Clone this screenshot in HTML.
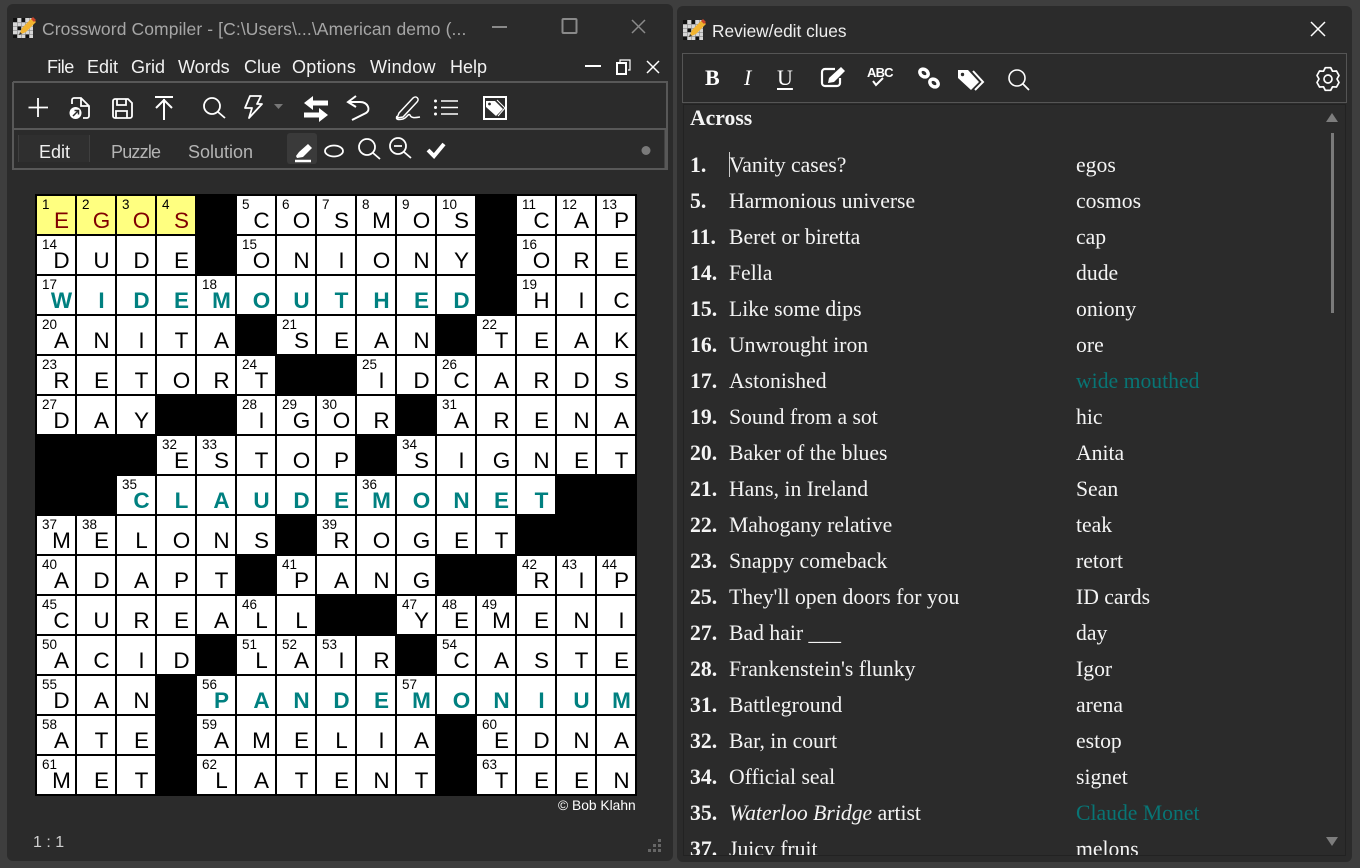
<!DOCTYPE html>
<html><head><meta charset="utf-8"><style>
html,body{margin:0;padding:0;width:1360px;height:868px;overflow:hidden;background:#3e3e3e}
body{position:relative;font-family:"Liberation Sans",sans-serif}
.a{position:absolute;white-space:nowrap}
.win{position:absolute;background:#2b2b2b;border-radius:6px}
.m{position:absolute;top:56px;font-size:18px;line-height:22px;color:#f2f2f2;white-space:nowrap}
.t{position:absolute;top:141px;font-size:18px;line-height:22px;color:#b4b4b4;white-space:nowrap}
#g{position:absolute;left:35px;top:194px;width:602px;height:602px;background:#000;display:grid;grid-template-columns:repeat(15,38px);grid-auto-rows:38px;gap:2px;padding:2px;box-sizing:border-box;font-family:"Liberation Sans",sans-serif}
#g div{background:#fff;position:relative;color:#000;font-size:22.5px;line-height:49px;text-align:center;padding-left:11px;width:27px;height:38px}
#g div.b{background:#000}
#g div.y{background:#ffff80;color:#800000}
#g div.k{color:#008080;font-weight:bold}
#g i{position:absolute;left:5px;top:0;width:auto;font:normal 13.5px/18px "Liberation Sans",sans-serif;color:#000}
#c{position:absolute;left:690px;top:0;width:640px;height:855px;overflow:hidden;font-family:"Liberation Serif",serif;font-size:21.7px;color:#f4f4f4}
#c p{position:absolute;margin:0;white-space:nowrap;line-height:26px}
#c b{position:absolute;left:0}
#c span{position:absolute;left:39px}
#c u{position:absolute;left:386px;text-decoration:none}
#c u.q{color:#087575}
svg{position:absolute;left:0;top:0}
</style></head><body>
<div class="win" style="left:7px;top:4px;width:666px;height:857px"></div>
<div class="win" style="left:677px;top:6px;width:675px;height:856px"></div>

<svg width="1360" height="868" fill="none" stroke="#fff" stroke-width="2">
<!-- toolbar frame -->
<path d="M13 82H667V129M13 82V169H667V129M14 129H667" stroke="#585858"/>
<path d="M666 130V168" stroke="#585858" stroke-width="3"/>
<rect x="18" y="135" width="72" height="27" fill="#2f2f2f" stroke="none"/>
<path d="M18.500 135V162M89.500 135V162" stroke="#3f3f3f" stroke-width="1"/>
<rect x="287" y="133" width="30" height="31" rx="3" fill="#3a3a3a" stroke="none"/>
<!-- right toolbar frame -->
<rect x="682.500" y="53.500" width="664" height="49" stroke="#555" stroke-width="1"/>
<rect x="683.500" y="104.500" width="662" height="751" stroke="#222" stroke-width="1"/>

<!-- app icons -->
<g stroke="none">
<rect x="13" y="18" width="20" height="20" fill="#d6d6d6"/>
<path d="M13 18h4v4h-4zM21 18h4v4h-4zM17 26h4v4h-4zM13 34h4v4h-4zM25 34h4v4h-4zM29 22h4v3h-4z" fill="#111"/>
<path d="M13 22h20v.6H13zM13 26h20v.6H13zM13 30h20v.6H13zM13 34h20v.6H13zM17 18h.6v20H17zM21 18h.6v20H21zM25 18h.6v20H25zM29 18h.6v20H29z" fill="#888"/>
<path d="M19 35l3-7L32 18l4 4-10 10z" fill="#f2b430"/>
<path d="M31 19l2-2 3 3-2 2z" fill="#c8442a"/>
<path d="M19 35l1-3 2 2z" fill="#333"/>
</g>
<g stroke="none" transform="translate(670 2)">
<rect x="13" y="18" width="20" height="20" fill="#d6d6d6"/>
<path d="M13 18h4v4h-4zM21 18h4v4h-4zM17 26h4v4h-4zM13 34h4v4h-4zM25 34h4v4h-4zM29 22h4v3h-4z" fill="#111"/>
<path d="M13 22h20v.6H13zM13 26h20v.6H13zM13 30h20v.6H13zM13 34h20v.6H13zM17 18h.6v20H17zM21 18h.6v20H21zM25 18h.6v20H25zM29 18h.6v20H29z" fill="#888"/>
<path d="M19 35l3-7L32 18l4 4-10 10z" fill="#f2b430"/>
<path d="M31 19l2-2 3 3-2 2z" fill="#c8442a"/>
<path d="M19 35l1-3 2 2z" fill="#333"/>
</g>

<!-- window controls -->
<path d="M492 27H507" stroke="#8a8a8a"/>
<rect x="562.500" y="19" width="14" height="14" rx="1" stroke="#8a8a8a"/>
<path d="M632 20L645 33M645 20L632 33" stroke="#8a8a8a" stroke-width="1.500"/>
<path d="M585 66H601"/>
<path d="M617 63h9v11h-9z"/><path d="M620 62v-2h10v10h-2" stroke-width="1.200"/>
<path d="M647 61L659 73M659 61L647 73" stroke-width="1.500"/>
<path d="M1311 22L1325 36M1325 22L1311 36" stroke-width="1.500"/>

<!-- main toolbar row -->
<path d="M38 98V117M28.500 107.500H48" stroke-width="1.800"/>
<path d="M72 104v-4a2 2 0 0 1 2-2h7l8 8v10a2 2 0 0 1-2 2h-4M81 98v8h8" stroke-width="1.800"/>
<circle cx="75.500" cy="113" r="6" fill="#fff" stroke="none"/>
<path d="M73 116l5-5M74.500 110.500h4v4" stroke="#2b2b2b" stroke-width="1.500"/>
<path d="M115 99h13l4 4v13a2 2 0 0 1-2 2h-15a2 2 0 0 1-2-2v-15a2 2 0 0 1 2-2zM117 99v6h9v-6M116 118v-7h11v7" stroke-width="1.800"/>
<path d="M155 97H173M164 120V99M156 108L164 100L172 108" stroke-width="2"/>
<circle cx="212" cy="106" r="8" stroke-width="1.800"/><path d="M218 112L225 118" stroke-width="1.800"/>
<path d="M250 96h11l-4 8h5l-13 14 3-10h-7z" stroke-width="1.800" stroke-linejoin="round"/>
<path d="M274 104h9l-4.500 5z" fill="#777" stroke="none"/>
<path d="M304 103l9-7v4.500h15v5h-15v4.500zM328 115l-9-7v4.500h-15v5h15v4.500z" fill="#fff" stroke="none"/>
<path d="M356 96L348 102L356 107M348 102H360C368 102 371 110 366 113L352 120" stroke-width="2"/>
<path d="M399 113L413 98C416 95 420 99 417 102L403 117L397 118ZM397 116C395 120 399 120 403 119C407 118 408 113 410 115C411 118 414 118 420 117" stroke-width="1.500"/>
<path d="M441 101H458M441 107.500H458M441 114H458" stroke-width="1.500"/>
<circle cx="435.500" cy="101" r="1.500" fill="#fff" stroke="none"/><circle cx="435.500" cy="107.500" r="1.500" fill="#fff" stroke="none"/><circle cx="435.500" cy="114" r="1.500" fill="#fff" stroke="none"/>
<rect x="484" y="97" width="22" height="22"/>
<path d="M486 101h9l8 8-7 7-10-9z" fill="#fff" stroke="none"/><circle cx="489.500" cy="104" r="1.400" fill="#2b2b2b" stroke="none"/>
<path d="M497 100l8 8-7 8" stroke-width="1"/>

<!-- second row -->
<path d="M296 156L299 152L308 144L312 148L303 157L297 158Z" fill="#fff" stroke="none"/>
<path d="M295 161H311" stroke-width="2.500"/>
<ellipse cx="334" cy="151" rx="9" ry="5.500" stroke-width="1.800"/>
<circle cx="367" cy="147" r="8" stroke-width="1.800"/><path d="M373 153L380 159" stroke-width="1.800"/>
<circle cx="398" cy="146" r="8" stroke-width="1.800"/><path d="M404 152L411 158M394 146H402" stroke-width="1.800"/>
<path d="M428 150L434 156L444 144" stroke-width="4"/>
<circle cx="646" cy="150.500" r="4.500" fill="#7a7a7a" stroke="none"/>

<!-- resize grip -->
<path d="M658 839h3v3h-3zM653 844h3v3h-3zM658 844h3v3h-3zM648 849h3v3h-3zM653 849h3v3h-3zM658 849h3v3h-3z" fill="#666" stroke="none"/>

<!-- right toolbar icons -->
<path d="M835 69h-10a3 3 0 0 0-3 3v11a3 3 0 0 0 3 3h12a3 3 0 0 0 3-3v-5" stroke-width="2.200"/>
<path d="M829 78L841 67l4 4-11 11-6 1z" fill="#fff" stroke="none"/>
<path d="M873 81l3 4 7-7" stroke-width="2"/>
<g stroke-width="3.500"><ellipse cx="924" cy="73" rx="4.500" ry="3.500" transform="rotate(38 924 73)"/><ellipse cx="934" cy="83" rx="4.500" ry="3.500" transform="rotate(38 934 83)"/></g>
<path d="M958 70h10l11 12-8 8-13-12z" fill="#fff" stroke="none"/>
<path d="M973 71l10 11-8 8" stroke-width="2"/>
<circle cx="962.500" cy="74.500" r="1.700" fill="#2b2b2b" stroke="none"/>
<circle cx="1017" cy="78" r="8" stroke-width="1.600"/><path d="M1023 84L1029 90" stroke-width="1.800"/>
<g transform="translate(1328 79)" stroke-width="1.700" stroke-linejoin="round">
<path d="M-2.700-11.300L2.700-11.300L4.500-7.800L8.500-8L11-3.500L9 0L11 3.500L8.500 8L4.500 7.800L2.700 11.300L-2.700 11.300L-4.500 7.800L-8.500 8L-11 3.500L-9 0L-11-3.500L-8.500-8L-4.500-7.800Z"/>
<circle r="4"/>
</g>

<!-- scrollbar -->
<path d="M1332 113l6 9h-12z" fill="#7d7d7d" stroke="none"/>
<path d="M1326 837h12l-6 9z" fill="#7d7d7d" stroke="none"/>
<rect x="1331" y="133" width="3" height="180" fill="#7a7a7a" stroke="none"/>
<rect x="729" y="152" width="1" height="25" fill="#ccc" stroke="none"/>
</svg>

<!-- window titles -->
<div class="a" style="left:42px;top:18px;font-size:17.500px;line-height:22px;color:#a6a6a6;letter-spacing:.1px">Crossword Compiler - [C:\Users\...\American demo (...</div>
<div class="a" style="left:712px;top:20px;font-size:17.300px;line-height:22px;color:#eee">Review/edit clues</div>

<!-- menu -->
<span class="m" style="left:47px;letter-spacing:-.6px">File</span>
<span class="m" style="left:87px">Edit</span>
<span class="m" style="left:131px">Grid</span>
<span class="m" style="left:178px">Words</span>
<span class="m" style="left:244px">Clue</span>
<span class="m" style="left:292px;letter-spacing:.3px">Options</span>
<span class="m" style="left:370px;letter-spacing:.3px">Window</span>
<span class="m" style="left:450px">Help</span>

<span class="t" style="left:39px;color:#f0f0f0">Edit</span>
<span class="t" style="left:111px;letter-spacing:-.8px">Puzzle</span>
<span class="t" style="left:188px">Solution</span>

<!-- right toolbar text -->
<div class="a" style="left:705px;top:65px;font:bold 22px/26px 'Liberation Serif',serif;color:#fff">B</div>
<div class="a" style="left:744px;top:65px;font:italic 22px/26px 'Liberation Serif',serif;color:#fff">I</div>
<div class="a" style="left:777px;top:65px;font:22px/26px 'Liberation Serif',serif;color:#fff;text-decoration:underline;text-underline-offset:3px">U</div>
<div class="a" style="left:867px;top:66px;font:bold 13px/14px 'Liberation Sans',sans-serif;color:#fff;letter-spacing:-.8px">ABC</div>

<!-- grid -->
<div id="g">
<div class="y"><i>1</i>E</div><div class="y"><i>2</i>G</div><div class="y"><i>3</i>O</div><div class="y"><i>4</i>S</div><div class="b"></div><div><i>5</i>C</div><div><i>6</i>O</div><div><i>7</i>S</div><div><i>8</i>M</div><div><i>9</i>O</div><div><i>10</i>S</div><div class="b"></div><div><i>11</i>C</div><div><i>12</i>A</div><div><i>13</i>P</div>
<div><i>14</i>D</div><div>U</div><div>D</div><div>E</div><div class="b"></div><div><i>15</i>O</div><div>N</div><div>I</div><div>O</div><div>N</div><div>Y</div><div class="b"></div><div><i>16</i>O</div><div>R</div><div>E</div>
<div class="k"><i>17</i>W</div><div class="k">I</div><div class="k">D</div><div class="k">E</div><div class="k"><i>18</i>M</div><div class="k">O</div><div class="k">U</div><div class="k">T</div><div class="k">H</div><div class="k">E</div><div class="k">D</div><div class="b"></div><div><i>19</i>H</div><div>I</div><div>C</div>
<div><i>20</i>A</div><div>N</div><div>I</div><div>T</div><div>A</div><div class="b"></div><div><i>21</i>S</div><div>E</div><div>A</div><div>N</div><div class="b"></div><div><i>22</i>T</div><div>E</div><div>A</div><div>K</div>
<div><i>23</i>R</div><div>E</div><div>T</div><div>O</div><div>R</div><div><i>24</i>T</div><div class="b"></div><div class="b"></div><div><i>25</i>I</div><div>D</div><div><i>26</i>C</div><div>A</div><div>R</div><div>D</div><div>S</div>
<div><i>27</i>D</div><div>A</div><div>Y</div><div class="b"></div><div class="b"></div><div><i>28</i>I</div><div><i>29</i>G</div><div><i>30</i>O</div><div>R</div><div class="b"></div><div><i>31</i>A</div><div>R</div><div>E</div><div>N</div><div>A</div>
<div class="b"></div><div class="b"></div><div class="b"></div><div><i>32</i>E</div><div><i>33</i>S</div><div>T</div><div>O</div><div>P</div><div class="b"></div><div><i>34</i>S</div><div>I</div><div>G</div><div>N</div><div>E</div><div>T</div>
<div class="b"></div><div class="b"></div><div class="k"><i>35</i>C</div><div class="k">L</div><div class="k">A</div><div class="k">U</div><div class="k">D</div><div class="k">E</div><div class="k"><i>36</i>M</div><div class="k">O</div><div class="k">N</div><div class="k">E</div><div class="k">T</div><div class="b"></div><div class="b"></div>
<div><i>37</i>M</div><div><i>38</i>E</div><div>L</div><div>O</div><div>N</div><div>S</div><div class="b"></div><div><i>39</i>R</div><div>O</div><div>G</div><div>E</div><div>T</div><div class="b"></div><div class="b"></div><div class="b"></div>
<div><i>40</i>A</div><div>D</div><div>A</div><div>P</div><div>T</div><div class="b"></div><div><i>41</i>P</div><div>A</div><div>N</div><div>G</div><div class="b"></div><div class="b"></div><div><i>42</i>R</div><div><i>43</i>I</div><div><i>44</i>P</div>
<div><i>45</i>C</div><div>U</div><div>R</div><div>E</div><div>A</div><div><i>46</i>L</div><div>L</div><div class="b"></div><div class="b"></div><div><i>47</i>Y</div><div><i>48</i>E</div><div><i>49</i>M</div><div>E</div><div>N</div><div>I</div>
<div><i>50</i>A</div><div>C</div><div>I</div><div>D</div><div class="b"></div><div><i>51</i>L</div><div><i>52</i>A</div><div><i>53</i>I</div><div>R</div><div class="b"></div><div><i>54</i>C</div><div>A</div><div>S</div><div>T</div><div>E</div>
<div><i>55</i>D</div><div>A</div><div>N</div><div class="b"></div><div class="k"><i>56</i>P</div><div class="k">A</div><div class="k">N</div><div class="k">D</div><div class="k">E</div><div class="k"><i>57</i>M</div><div class="k">O</div><div class="k">N</div><div class="k">I</div><div class="k">U</div><div class="k">M</div>
<div><i>58</i>A</div><div>T</div><div>E</div><div class="b"></div><div><i>59</i>A</div><div>M</div><div>E</div><div>L</div><div>I</div><div>A</div><div class="b"></div><div><i>60</i>E</div><div>D</div><div>N</div><div>A</div>
<div><i>61</i>M</div><div>E</div><div>T</div><div class="b"></div><div><i>62</i>L</div><div>A</div><div>T</div><div>E</div><div>N</div><div>T</div><div class="b"></div><div><i>63</i>T</div><div>E</div><div>E</div><div>N</div>
</div>

<div class="a" style="left:558px;top:798px;font-size:13.800px;line-height:16px;color:#fff">© Bob Klahn</div>
<div class="a" style="left:33px;top:833px;font-size:16px;line-height:20px;color:#d0d0d0">1 : 1</div>

<!-- clues -->
<div id="c">
<p style="top:105px"><b>Across</b></p>
<p style="top:152px"><b>1.</b><span>Vanity cases?</span><u>egos</u></p>
<p style="top:188px"><b>5.</b><span>Harmonious universe</span><u>cosmos</u></p>
<p style="top:224px"><b>11.</b><span>Beret or biretta</span><u>cap</u></p>
<p style="top:260px"><b>14.</b><span>Fella</span><u>dude</u></p>
<p style="top:296px"><b>15.</b><span>Like some dips</span><u>oniony</u></p>
<p style="top:332px"><b>16.</b><span>Unwrought iron</span><u>ore</u></p>
<p style="top:368px"><b>17.</b><span>Astonished</span><u class="q">wide mouthed</u></p>
<p style="top:404px"><b>19.</b><span>Sound from a sot</span><u>hic</u></p>
<p style="top:440px"><b>20.</b><span>Baker of the blues</span><u>Anita</u></p>
<p style="top:476px"><b>21.</b><span>Hans, in Ireland</span><u>Sean</u></p>
<p style="top:512px"><b>22.</b><span>Mahogany relative</span><u>teak</u></p>
<p style="top:548px"><b>23.</b><span>Snappy comeback</span><u>retort</u></p>
<p style="top:584px"><b>25.</b><span>They'll open doors for you</span><u>ID cards</u></p>
<p style="top:620px"><b>27.</b><span>Bad hair ___</span><u>day</u></p>
<p style="top:656px"><b>28.</b><span>Frankenstein's flunky</span><u>Igor</u></p>
<p style="top:692px"><b>31.</b><span>Battleground</span><u>arena</u></p>
<p style="top:728px"><b>32.</b><span>Bar, in court</span><u>estop</u></p>
<p style="top:764px"><b>34.</b><span>Official seal</span><u>signet</u></p>
<p style="top:800px"><b>35.</b><span><em>Waterloo Bridge</em> artist</span><u class="q">Claude Monet</u></p>
<p style="top:836px"><b>37.</b><span>Juicy fruit</span><u>melons</u></p>
</div>
</body></html>
